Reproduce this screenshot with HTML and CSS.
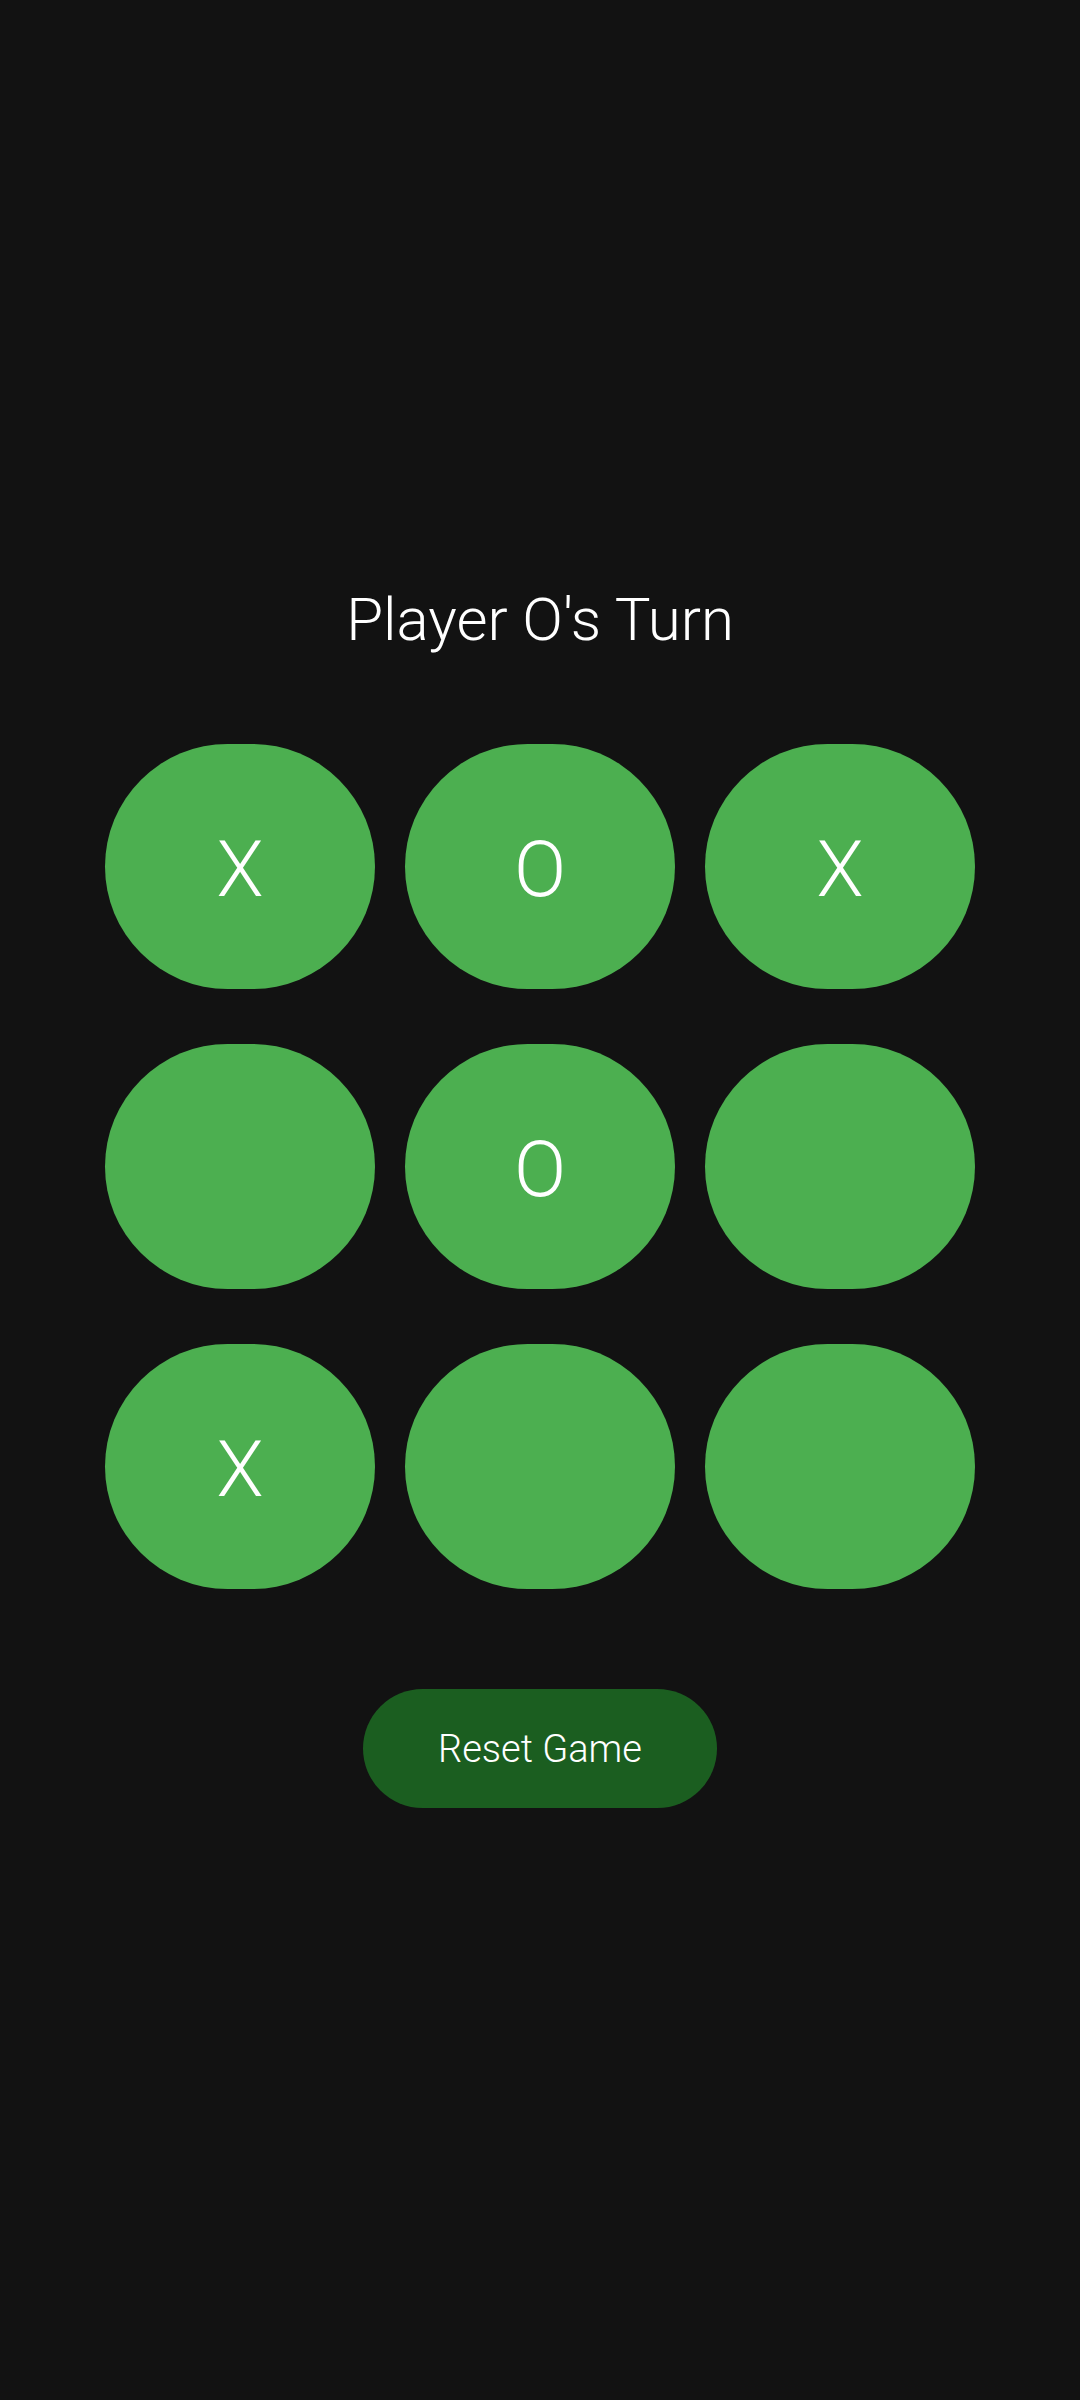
FILE: index.html
```html
<!DOCTYPE html>
<html lang="en">
<head>
<meta charset="utf-8">
<title>Tic Tac Toe</title>
<link rel="stylesheet" href="styles.css">
</head>
<body>
<main class="game">
  <h1 class="status">Player O's Turn</h1>
  <div class="board">
    <button class="cell">X</button>
    <button class="cell">O</button>
    <button class="cell">X</button>
    <button class="cell"></button>
    <button class="cell">O</button>
    <button class="cell"></button>
    <button class="cell">X</button>
    <button class="cell"></button>
    <button class="cell"></button>
  </div>
  <button class="reset">Reset Game</button>
</main>
</body>
</html>
```
FILE: styles.css
```css
html, body {
  margin: 0;
  padding: 0;
  background: #121212;
}
body {
  width: 1080px;
  height: 2400px;
  font-family: Roboto, "Noto Sans", sans-serif;
  color: #ffffff;
}
.game {
  height: 2400px;
  box-sizing: border-box;
  padding-bottom: 8px;
  display: flex;
  flex-direction: column;
  align-items: center;
  justify-content: center;
}
.status {
  margin: 0 0 88px 0;
  font-size: 60px;
  line-height: 72px;
  font-weight: 300;
  letter-spacing: 0;
}
.board {
  display: grid;
  grid-template-columns: repeat(3, 270px);
  grid-auto-rows: 245px;
  gap: 55px 30px;
}
.cell {
  border: none;
  padding: 8px 0 0 0;
  margin: 0;
  background: #4caf50;
  border-radius: 9999px;
  color: #ffffff;
  font-family: Roboto, "Noto Sans", sans-serif;
  font-size: 77px;
  font-weight: 300;
  line-height: 1;
  display: flex;
  align-items: center;
  justify-content: center;
}
.reset {
  margin-top: 100px;
  width: 354px;
  height: 119px;
  border: none;
  border-radius: 9999px;
  background: #1b5e20;
  color: #ffffff;
  font-family: Roboto, "Noto Sans", sans-serif;
  font-size: 38px;
  font-weight: 300;
  padding: 0;
}
```
